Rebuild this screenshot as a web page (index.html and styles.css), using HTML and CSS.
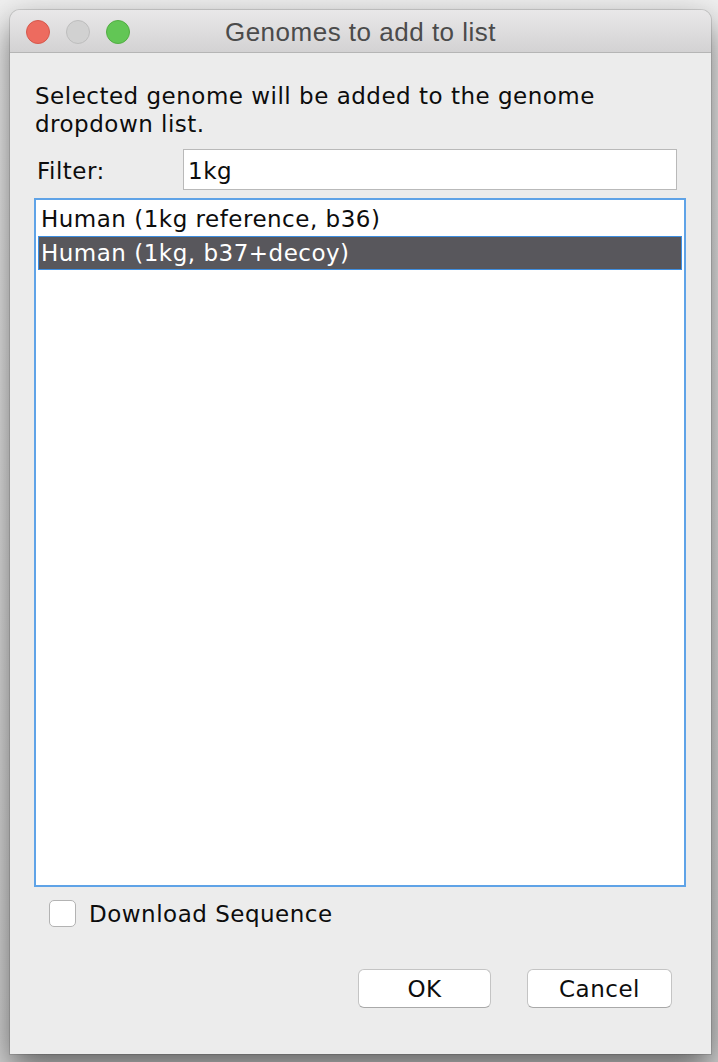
FILE: index.html
```html
<!DOCTYPE html>
<html>
<head>
<meta charset="utf-8">
<link rel="stylesheet" href="styles.css">
</head>
<body>
<div class="window">
  <div class="titlebar">
    <div class="lights">
      <span class="light red"></span>
      <span class="light grey"></span>
      <span class="light green"></span>
    </div>
    <div class="title">Genomes to add to list</div>
  </div>
  <div class="content">
    <p class="intro">Selected genome will be added to the genome<br>dropdown list.</p>
    <div class="filter-row">
      <span class="filter-label">Filter:</span>
      <div class="filter-input">1kg</div>
    </div>
    <div class="list">
      <div class="item">Human (1kg reference, b36)</div>
      <div class="item selected">Human (1kg, b37+decoy)</div>
    </div>
    <div class="check-row">
      <span class="checkbox"></span>
      <span class="check-label">Download Sequence</span>
    </div>
    <div class="buttons">
      <div class="btn ok">OK</div>
      <div class="btn cancel">Cancel</div>
    </div>
  </div>
</div>
</body>
</html>
```
FILE: styles.css
```css
html, body {
  margin: 0;
  padding: 0;
}
body {
  width: 718px;
  height: 1062px;
  overflow: hidden;
  background: linear-gradient(#f0f0f0, #d4d4d4);
  padding: 10px 0 0 10px;
  box-sizing: border-box;
}
.window {
  width: 701px;
  height: 1044px;
  background: #ececec;
  border-radius: 10px 10px 0 0;
  box-shadow: 0 14px 34px rgba(0,0,0,0.55), 0 0 0 1px rgba(0,0,0,0.12);
  display: flex;
  flex-direction: column;
  overflow: hidden;
}
.titlebar {
  height: 42px;
  flex: none;
  background: linear-gradient(#e9e8e9, #d3d2d3);
  border-bottom: 1px solid #b5b5b5;
  display: flex;
  align-items: center;
  position: relative;
}
.lights {
  display: flex;
  gap: 16px;
  padding-left: 16px;
  margin-top: 2px;
}
.light {
  width: 24px;
  height: 24px;
  border-radius: 50%;
  box-sizing: border-box;
}
.red { background: #ed6b5f; border: 1px solid #d5584c; }
.grey { background: #d1d1d1; border: 1px solid #bdbdbd; }
.green { background: #62c655; border: 1px solid #52ad43; }
.title {
  position: absolute;
  left: 0;
  right: 0;
  top: 0;
  bottom: 0;
  display: flex;
  align-items: center;
  justify-content: center;
  font-family: "Liberation Sans", Arial, sans-serif;
  font-size: 26px;
  letter-spacing: 0.5px;
  color: #4b4b4b;
  padding-top: 2px;
}
.content {
  flex: 1;
  display: flex;
  flex-direction: column;
  padding: 29px 25px 0 24px;
  font-family: "DejaVu Sans", sans-serif;
  font-size: 23px;
  letter-spacing: 0.5px;
  color: #0d0d0d;
}
.intro {
  margin: 0 0 0 1px;
  line-height: 28px;
}
.filter-row {
  display: flex;
  align-items: center;
  margin-top: 11px;
  margin-right: 9px;
  height: 41px;
}
.filter-label {
  width: 149px;
  padding-left: 3px;
  padding-top: 3px;
  box-sizing: border-box;
}
.filter-input {
  flex: 1;
  height: 41px;
  box-sizing: border-box;
  background: #fff;
  border: 1px solid #b9b9b9;
  padding-left: 4px;
  padding-top: 2px;
  display: flex;
  align-items: center;
}
.list {
  margin-top: 8px;
  height: 689px;
  box-sizing: border-box;
  background: #fff;
  border: 2px solid #5fa3e7;
  padding: 2px 2px 0 2px;
}
.item {
  height: 34px;
  line-height: 34px;
  padding-left: 3px;
  box-sizing: border-box;
}
.item.selected {
  background: #58575c;
  color: #fff;
  outline: 1px solid #3e8ee0;
  outline-offset: -1px;
}
.check-row {
  display: flex;
  align-items: center;
  margin-top: 13px;
  padding-left: 15px;
  gap: 13px;
}
.checkbox {
  width: 27px;
  height: 27px;
  box-sizing: border-box;
  background: #fff;
  border: 1px solid #b3b3b3;
  border-radius: 5px;
}
.buttons {
  display: flex;
  justify-content: flex-end;
  gap: 36px;
  margin-top: 42px;
  margin-right: 14px;
}
.btn {
  height: 39px;
  box-sizing: border-box;
  background: #fff;
  border: 1px solid #c4c4c4;
  border-bottom-color: #a9a9a9;
  border-radius: 6px;
  display: flex;
  align-items: center;
  justify-content: center;
}
.ok { width: 133px; }
.cancel { width: 145px; }
```
